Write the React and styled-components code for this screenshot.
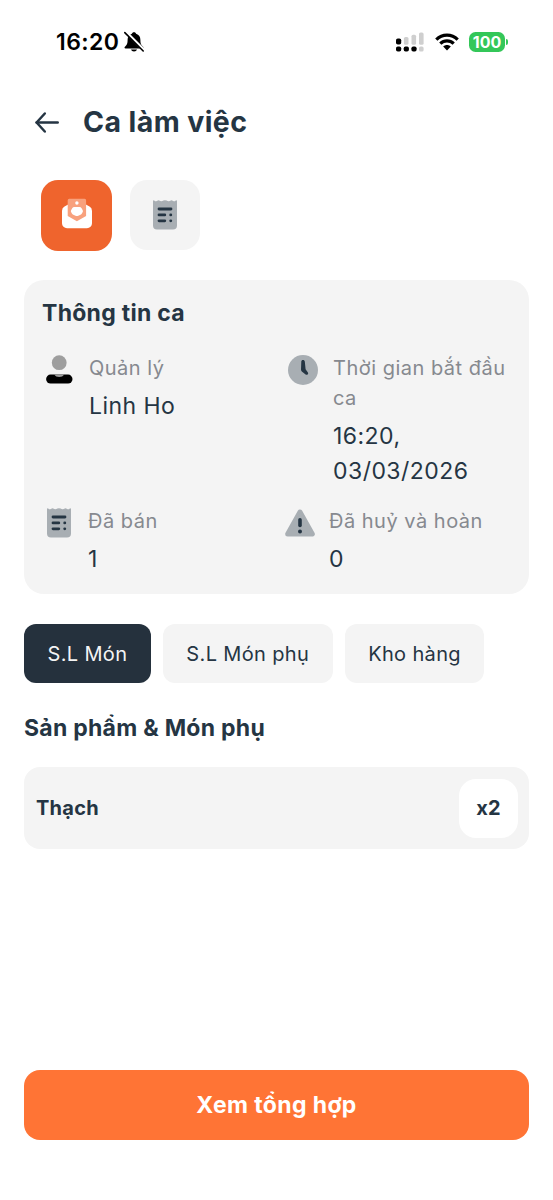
import React, { useState } from 'react';
import styled, { createGlobalStyle } from 'styled-components';

const tabs = ['S.L Món', 'S.L Món phụ', 'Kho hàng'];

function BellOffIcon() {
  return (
    <svg width='22' height='22' viewBox='0 0 22 22'>
      <path d='M11 1.2c-1.2 0-1.9.7-2.1 1.6C6 3.700 4.600 6 4.600 9c0 4-1 5.200-2.700 6.800-.7.8-.4 1.700.6 1.700h17c1 0 1.300-.9.600-1.700-1.700-1.600-2.700-2.800-2.700-6.800 0-3-1.400-5.300-4.300-6.200-.2-.9-.9-1.600-2.100-1.600z' fill='#000' />
      <path d='M8 18.600h6c-.4 1.300-1.500 2-3 2s-2.600-.7-3-2z' fill='#000' />
      <path d='M3.200 1.400l17 17' stroke='#fff' strokeWidth='3' />
      <path d='M1.800 1.600l18.400 18.400' stroke='#000' strokeWidth='1.600' strokeLinecap='round' />
    </svg>
  );
}

function SignalIcon() {
  return (
    <svg width='28' height='20' viewBox='0 0 28 20'>
      <g fill='#000'>
        <rect x='0' y='6.500' width='5.200' height='6' rx='1.800' />
        <rect x='0' y='14.500' width='5.200' height='5' rx='1.800' />
        <rect x='7.700' y='14.500' width='5.200' height='5' rx='1.800' />
        <rect x='15.400' y='14.500' width='5.200' height='5' rx='1.800' />
      </g>
      <g fill='#cfcfcf'>
        <rect x='7.900' y='5' width='4.600' height='7.800' rx='1.600' />
        <rect x='15.500' y='2.700' width='4.600' height='10.100' rx='1.600' />
        <rect x='23' y='0.500' width='4.600' height='12.300' rx='1.600' />
        <rect x='23' y='14.500' width='4.600' height='5' rx='1.600' />
      </g>
    </svg>
  );
}

function WifiIcon() {
  return (
    <svg width='24' height='18' viewBox='0 0 24 18'>
      <g fill='none' stroke='#000' strokeWidth='3.200'>
        <path d='M1.300 6.600C7.300.6 16.700.6 22.700 6.600' />
        <path d='M5.300 10.700c3.800-3.700 9.600-3.700 13.400 0' />
      </g>
      <path d='M8.200 13.500c2.200-2 5.400-2 7.600 0L12 17.400z' fill='#000' />
    </svg>
  );
}

function ArrowIcon() {
  return (
    <svg width='24' height='22' viewBox='0 0 24 22' fill='none' stroke='#253543' strokeWidth='2.500' strokeLinecap='round' strokeLinejoin='round'>
      <path d='M22.700 11.500H1.600' />
      <path d='M9.800 2.500L1.600 11.500l8.200 9' />
    </svg>
  );
}

function EnvelopeIcon() {
  return (
    <svg width='30' height='35' viewBox='0 0 30 35'>
      <path d='M7.500 5.800h15L27.500 8.600A5 5 0 0 1 30 13V25.300a5 5 0 0 1-5 5H5a5 5 0 0 1-5-5V13A5 5 0 0 1 2.500 8.600z' fill='#fff' />
      <path d='M7.200 .8h15.400a1.500 1.500 0 0 1 1.500 1.500V18L14.900 23.200 5.700 18V2.300a1.500 1.500 0 0 1 1.500-1.500z' fill='#f8a17d' />
      <circle cx='14.900' cy='5' r='1.700' fill='#fff' />
      <path d='M12.400 9h5a2.500 2.500 0 0 1 2.200 1.300l1.100 2a1.900 1.900 0 0 1 0 1.800l-.8 1.400a3 3 0 0 1-1.400 1.200l-2.200 1a3.500 3.500 0 0 1-2.800 0l-2.200-1a3 3 0 0 1-1.400-1.200l-.8-1.400a1.900 1.900 0 0 1 0-1.800l1.100-2A2.500 2.500 0 0 1 12.400 9z' fill='#fff' />
    </svg>
  );
}

function ReceiptIcon() {
  return (
    <svg width='24' height='30' viewBox='0 0 24 30'>
      <path d='M0 1.200Q0 0 1.200 .4 3 2 4.800 .6 5.500 0 6.200.6 8.400 2 10.400.6 12 -.2 13.600.6 15.600 2 17.800.6 18.500 0 19.200.6 21 2 22.800.4 24 0 24 1.200V25.600a4 4 0 0 1-4 4H4a4 4 0 0 1-4-4z' fill='#a8aeb3' />
      <g stroke='#253543' strokeWidth='2.800' strokeLinecap='round'>
        <path d='M6 9H18' />
        <path d='M6 14.900h5.800' />
        <path d='M17.700 14.900h.1' />
        <path d='M6 20.800h5.800' />
        <path d='M17.700 20.800h.1' />
      </g>
    </svg>
  );
}

function UserIcon() {
  return (
    <svg width='28' height='30' viewBox='0 0 28 30'>
      <rect x='.1' y='19.600' width='26.400' height='8.900' rx='4.450' fill='#000' />
      <circle cx='13.200' cy='7.700' r='7.400' fill='#9e9e9e' />
      <path d='M8.200 19.600h10c-1 1.700-2.800 2.500-5 2.500s-4-.8-5-2.500z' fill='#9e9e9e' />
    </svg>
  );
}

function ClockIcon() {
  return (
    <svg width='30' height='30' viewBox='0 0 30 30'>
      <circle cx='15' cy='15' r='15' fill='#a8aeb3' />
      <path d='M15 4.900c1 0 1.700.7 1.800 1.700l.8 7.600 2.300 3.300c.5.700.3 1.600-.4 2.100-.7.400-1.400.2-1.900-.2L13.800 16.500c-.6-.5-.8-1.200-.8-1.900L13.300 6.600c0-1 .7-1.700 1.700-1.700z' fill='#253543' />
    </svg>
  );
}

function WarningIcon() {
  return (
    <svg width='30' height='28' viewBox='0 0 30 28'>
      <path d='M15 4L27.300 26H2.700z' fill='#a8aeb3' stroke='#a8aeb3' strokeWidth='5' strokeLinejoin='round' />
      <path d='M15 11.800v5.600' stroke='#253543' strokeWidth='3.600' strokeLinecap='round' />
      <circle cx='15' cy='23.400' r='2' fill='#253543' />
    </svg>
  );
}

function App() {
  const [active, setActive] = useState(0);

  return (
    <ScreenStyled>
      <GlobalStyle />

      <StatusBarStyled>
        <ClockStyled>16:20</ClockStyled>
        <BellOffIcon />
        <StatusRightStyled>
          <SignalIcon />
          <WifiIcon />
          <BatteryStyled>100</BatteryStyled>
        </StatusRightStyled>
      </StatusBarStyled>

      <HeaderStyled>
        <BackButtonStyled aria-label='Quay lại'><ArrowIcon /></BackButtonStyled>
        <PageTitleStyled>Ca làm việc</PageTitleStyled>
      </HeaderStyled>

      <ModesStyled>
        <ModeButtonStyled $active><EnvelopeIcon /></ModeButtonStyled>
        <ModeButtonStyled><ReceiptIcon /></ModeButtonStyled>
      </ModesStyled>

      <InfoCardStyled>
        <CardTitleStyled>Thông tin ca</CardTitleStyled>
        <InfoGridStyled>
          <InfoItemStyled $gap='15px' $left='4px'>
            <UserIcon />
            <div>
              <LabelStyled>Quản lý</LabelStyled>
              <ValueStyled>Linh Ho</ValueStyled>
            </div>
          </InfoItemStyled>
          <InfoItemStyled $gap='15px' $left='3px'>
            <ClockIcon />
            <div>
              <LabelStyled>Thời gian bắt đầu ca</LabelStyled>
              <ValueStyled>16:20, 03/03/2026</ValueStyled>
            </div>
          </InfoItemStyled>
          <InfoItemStyled $gap='17px' $left='5px'>
            <ReceiptIcon />
            <div>
              <LabelStyled>Đã bán</LabelStyled>
              <ValueStyled>1</ValueStyled>
            </div>
          </InfoItemStyled>
          <InfoItemStyled $gap='14px' $left='0px'>
            <WarningIcon />
            <div>
              <LabelStyled>Đã huỷ và hoàn</LabelStyled>
              <ValueStyled>0</ValueStyled>
            </div>
          </InfoItemStyled>
        </InfoGridStyled>
      </InfoCardStyled>

      <TabsStyled>
        {tabs.map((tab, i) => (
          <TabStyled key={tab} $active={i === active} onClick={() => setActive(i)}>
            {tab}
          </TabStyled>
        ))}
      </TabsStyled>

      <SectionTitleStyled>Sản phẩm &amp; Món phụ</SectionTitleStyled>

      <ProductStyled>
        <span>Thạch</span>
        <CountStyled>x2</CountStyled>
      </ProductStyled>

      <SummaryButtonStyled>Xem tổng hợp</SummaryButtonStyled>
    </ScreenStyled>
  );
}

const GlobalStyle = createGlobalStyle`
  * {
    box-sizing: border-box;
  }
  body {
    margin: 0;
    background: #fff;
  }
  button {
    border: none;
    padding: 0;
    font-family: inherit;
    cursor: pointer;
  }
  svg {
    display: block;
    flex-shrink: 0;
    overflow: visible;
  }
`;

const ScreenStyled = styled.main`
  display: flex;
  flex-direction: column;
  height: 1200px;
  padding: 0 24px 60px;
  color: #253543;
  font-family: Inter, 'Liberation Sans', sans-serif;
`;

const StatusBarStyled = styled.div`
  display: flex;
  align-items: center;
  height: 83px;
  padding: 0 24px 0 32px;
  color: #000;
`;

const ClockStyled = styled.span`
  margin-right: 4px;
  font-size: 23px;
  font-weight: 600;
  letter-spacing: 0.4px;
`;

const StatusRightStyled = styled.div`
  display: flex;
  align-items: center;
  gap: 10.500px;
  margin-left: auto;
`;

const BatteryStyled = styled.span`
  position: relative;
  width: 36px;
  height: 20px;
  border-radius: 6.500px;
  background: #34c759;
  color: #fff;
  font-size: 16px;
  font-weight: 700;
  line-height: 20px;
  text-align: center;

  &::after {
    content: '';
    position: absolute;
    top: 7px;
    right: -3px;
    width: 2px;
    height: 6px;
    border-radius: 0 2px 2px 0;
    background: #34c759;
  }
`;

const HeaderStyled = styled.header`
  display: flex;
  align-items: center;
  gap: 24px;
  height: 76px;
  margin-top: 1px;
  padding-left: 11px;
`;

const BackButtonStyled = styled.button`
  background: none;
`;

const PageTitleStyled = styled.h1`
  margin: 0;
  font-size: 28.500px;
  font-weight: 700;
  letter-spacing: 0.4px;
  line-height: 36px;
`;

const ModesStyled = styled.div`
  display: flex;
  gap: 18px;
  margin-top: 20px;
  padding-left: 17px;
`;

const ModeButtonStyled = styled.button`
  display: flex;
  align-items: center;
  justify-content: center;
  width: ${({ $active }) => ($active ? '71px' : '70px')};
  height: ${({ $active }) => ($active ? '71px' : '70px')};
  border-radius: 17px;
  background: ${({ $active }) => ($active ? '#ef642d' : '#f4f4f4')};
`;

const InfoCardStyled = styled.section`
  height: 314px;
  margin-top: 29px;
  padding: 18px 18px 0;
  border-radius: 20px;
  background: #f4f4f4;
`;

const CardTitleStyled = styled.h2`
  margin: 0;
  font-size: 23px;
  font-weight: 700;
  letter-spacing: 0.28px;
  line-height: 31px;
`;

const InfoGridStyled = styled.div`
  display: grid;
  grid-template-columns: 243px 1fr;
  row-gap: 17px;
  margin-top: 24px;
`;

const InfoItemStyled = styled.div`
  display: flex;
  gap: ${({ $gap }) => $gap};
  padding-left: ${({ $left }) => $left};

  svg {
    margin-top: 2px;
  }
`;

const LabelStyled = styled.div`
  color: #86898f;
  font-size: 20px;
  letter-spacing: 0.5px;
  line-height: 30px;
`;

const ValueStyled = styled.div`
  margin-top: 6px;
  font-size: 23px;
  letter-spacing: 0.46px;
  line-height: 35px;
`;

const TabsStyled = styled.nav`
  display: flex;
  gap: 12px;
  margin-top: 30px;
`;

const TabStyled = styled.button`
  height: 59px;
  padding: 0 23.500px;
  border-radius: 12px;
  background: ${({ $active }) => ($active ? '#25313d' : '#f4f4f4')};
  color: ${({ $active }) => ($active ? '#f4f4f4' : '#253543')};
  font-size: 20px;
  letter-spacing: 0.35px;
  white-space: nowrap;
`;

const SectionTitleStyled = styled.h2`
  margin: 29px 0 0;
  font-size: 23px;
  font-weight: 700;
  letter-spacing: 0.27px;
  line-height: 32px;
`;

const ProductStyled = styled.div`
  display: flex;
  align-items: center;
  justify-content: space-between;
  height: 82px;
  margin-top: 23px;
  padding: 0 11px 0 12px;
  border-radius: 16px;
  background: #f4f4f4;
  font-size: 20px;
  font-weight: 700;
  letter-spacing: 0.25px;
`;

const CountStyled = styled.span`
  display: flex;
  align-items: center;
  justify-content: center;
  width: 59px;
  height: 59px;
  border-radius: 17px;
  background: #fff;
`;

const SummaryButtonStyled = styled.button`
  height: 70px;
  margin-top: auto;
  border-radius: 16px;
  background: #ff7435;
  color: #fff;
  font-size: 23px;
  font-weight: 700;
  letter-spacing: 0.38px;
`;

export default App;
